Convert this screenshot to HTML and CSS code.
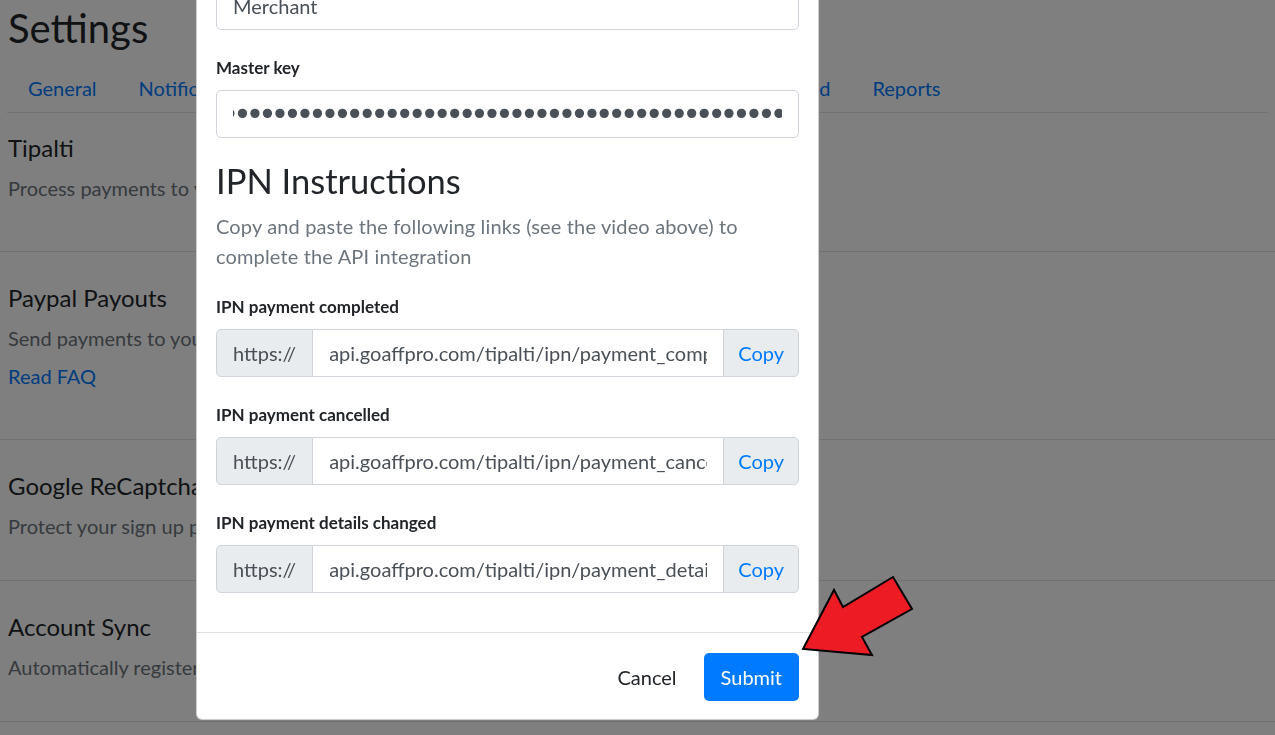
FILE: index.html
```html
<!DOCTYPE html>
<html lang="en">
<head>
<meta charset="utf-8">
<title>Settings</title>
<link rel="stylesheet" href="styles.css">
</head>
<body>
<div class="page">
  <header class="head">
    <h1 class="title">Settings</h1>
    <nav class="tabs">
      <a class="tab" href="#">General</a>
      <a class="tab" href="#">Notifications</a>
      <a class="tab" href="#">Integrations</a>
      <a class="tab" href="#">Payment</a>
      <a class="tab" href="#">Customer Portal</a>
      <a class="tab" href="#">Advanced</a>
      <a class="tab" href="#">Reports</a>
    </nav>
  </header>
  <section class="sec sec-first sec-loose">
    <h4 class="sec-title">Tipalti</h4>
    <p class="sec-desc">Process payments to your affiliates via Tipalti</p>
  </section>
  <section class="sec sec-loose">
    <h4 class="sec-title">Paypal Payouts</h4>
    <p class="sec-desc">Send payments to your affiliates via Paypal</p>
    <a class="sec-link" href="#">Read FAQ</a>
  </section>
  <section class="sec">
    <h4 class="sec-title">Google ReCaptcha</h4>
    <p class="sec-desc">Protect your sign up page from bots</p>
  </section>
  <section class="sec">
    <h4 class="sec-title">Account Sync</h4>
    <p class="sec-desc">Automatically register affiliates as customers</p>
  </section>
</div>

<div class="backdrop"></div>

<div class="modal">
  <div class="modal-body">
    <div class="field">
      <label class="lbl">Payer name</label>
      <input class="ctl" type="text" value="Merchant">
    </div>
    <div class="field field-key">
      <label class="lbl">Master key</label>
      <input class="ctl ctl-pass" type="password" value="abcdefghijklmnopqrstuvwxyzabcdefghijklmnopqrstuvwxyzabcdefghij">
    </div>
    <h3 class="ipn-title">IPN Instructions</h3>
    <p class="ipn-lead">Copy and paste the following links (see the video above) to complete the API integration</p>
    <div class="field">
      <label class="lbl">IPN payment completed</label>
      <div class="igroup">
        <span class="igroup-pre">https://</span>
        <input class="igroup-ctl" type="text" readonly value="api.goaffpro.com/tipalti/ipn/payment_completed">
        <button class="igroup-btn" type="button">Copy</button>
      </div>
    </div>
    <div class="field">
      <label class="lbl">IPN payment cancelled</label>
      <div class="igroup">
        <span class="igroup-pre">https://</span>
        <input class="igroup-ctl" type="text" readonly value="api.goaffpro.com/tipalti/ipn/payment_cancelled">
        <button class="igroup-btn" type="button">Copy</button>
      </div>
    </div>
    <div class="field">
      <label class="lbl">IPN payment details changed</label>
      <div class="igroup">
        <span class="igroup-pre">https://</span>
        <input class="igroup-ctl" type="text" readonly value="api.goaffpro.com/tipalti/ipn/payment_details_changed">
        <button class="igroup-btn" type="button">Copy</button>
      </div>
    </div>
  </div>
  <div class="modal-foot">
    <button class="btn btn-cancel" type="button">Cancel</button>
    <button class="btn btn-submit" type="button">Submit</button>
  </div>
</div>

<svg class="arrow" viewBox="0 0 130 100" aria-hidden="true">
  <polygon points="13,84 44,25 53,42 103,12 122,44 72,72 82,90" fill="#ED1C24" stroke="#000" stroke-width="2" stroke-linejoin="miter"/>
</svg>
</body>
</html>
```

FILE: styles.css
```css
html, body {
  margin: 0;
  height: 100%;
  overflow: hidden;
  background: #fff;
}

body {
  font-family: Lato, "Open Sans", sans-serif;
  color: #212529;
}

.head {
  padding: 4px 7px 0;
}

.title {
  font-size: 40px;
  line-height: 48px;
  font-weight: 400;
  margin: 0 0 14px 1px;
}

.tabs {
  display: flex;
  border-bottom: 1px solid #dee2e6;
}

.tab {
  padding: 7px 21px 9px;
  font-size: 20px;
  line-height: 30px;
  color: #007bff;
  text-decoration: none;
}

.sec {
  padding: 31px 8px 39px;
  border-bottom: 1px solid #dee2e6;
}

.sec-first {
  padding-top: 20px;
}

.sec-loose {
  padding-bottom: 48px;
}

.sec-title {
  font-size: 24px;
  line-height: 29px;
  font-weight: 400;
  margin: 0 0 11px;
}

.sec-desc {
  font-size: 20px;
  line-height: 30px;
  color: #6c757d;
  margin: 0;
}

.sec-link {
  display: inline-block;
  margin-top: 8px;
  font-size: 20px;
  line-height: 30px;
  color: #007bff;
  text-decoration: none;
}

.backdrop {
  position: fixed;
  inset: 0;
  background: rgba(0, 0, 0, 0.5);
  z-index: 1;
}

.modal {
  position: fixed;
  top: -73px;
  left: 196px;
  width: 623px;
  box-sizing: border-box;
  background: #fff;
  border: 1px solid rgba(0, 0, 0, 0.2);
  border-radius: 6px;
  z-index: 2;
}

.modal-body {
  padding: 20px 19px 13px;
}

.field {
  margin-bottom: 26px;
}

.field-key {
  margin-bottom: 21px;
}

.lbl {
  display: block;
  font-size: 17px;
  line-height: 24px;
  font-weight: 700;
  margin-bottom: 10px;
}

.ctl {
  display: block;
  width: 100%;
  box-sizing: border-box;
  height: 48px;
  padding: 0 16px;
  font-family: Lato, "Open Sans", sans-serif;
  font-size: 20px;
  color: #495057;
  background: #fff;
  border: 1px solid #ced4da;
  border-radius: 5px;
  outline: none;
}

.ctl-pass {
  direction: rtl;
  font-family: "DejaVu Sans", sans-serif;
  font-size: 32px;
  letter-spacing: -6.4px;
  color: #495057;
}

.ipn-title {
  font-size: 34.5px;
  line-height: 43px;
  font-weight: 400;
  margin: 0 0 9px;
}

.ipn-lead {
  font-size: 20px;
  line-height: 30px;
  letter-spacing: 0.15px;
  color: #6c757d;
  margin: 0 0 24px;
}

.igroup {
  display: flex;
  height: 48px;
}

.igroup-pre {
  display: flex;
  align-items: center;
  padding: 0 16px;
  background: #e9ecef;
  border: 1px solid #ced4da;
  border-radius: 5px 0 0 5px;
  font-size: 20px;
  color: #495057;
}

.igroup-ctl {
  flex: 1;
  min-width: 0;
  height: 48px;
  box-sizing: border-box;
  padding: 0 16px;
  border: 1px solid #ced4da;
  border-left: 0;
  border-right: 0;
  font-family: Lato, "Open Sans", sans-serif;
  font-size: 20px;
  color: #495057;
  background: #fff;
  outline: none;
}

.igroup-btn {
  padding: 0 14px;
  background: #e9ecef;
  border: 1px solid #ced4da;
  border-radius: 0 5px 5px 0;
  font-family: Lato, "Open Sans", sans-serif;
  font-size: 20px;
  color: #007bff;
}

.modal-foot {
  display: flex;
  justify-content: flex-end;
  align-items: center;
  gap: 10px;
  border-top: 1px solid #dee2e6;
  padding: 20px 19px 18px;
}

.btn {
  height: 48px;
  padding: 0 16px;
  font-family: Lato, "Open Sans", sans-serif;
  font-size: 20px;
  border: 1px solid transparent;
  border-radius: 5px;
}

.btn-cancel {
  background: transparent;
  color: #212529;
}

.btn-submit {
  background: #007bff;
  color: #fff;
}

.arrow {
  position: fixed;
  left: 790px;
  top: 565px;
  width: 130px;
  height: 100px;
  z-index: 3;
}
```
